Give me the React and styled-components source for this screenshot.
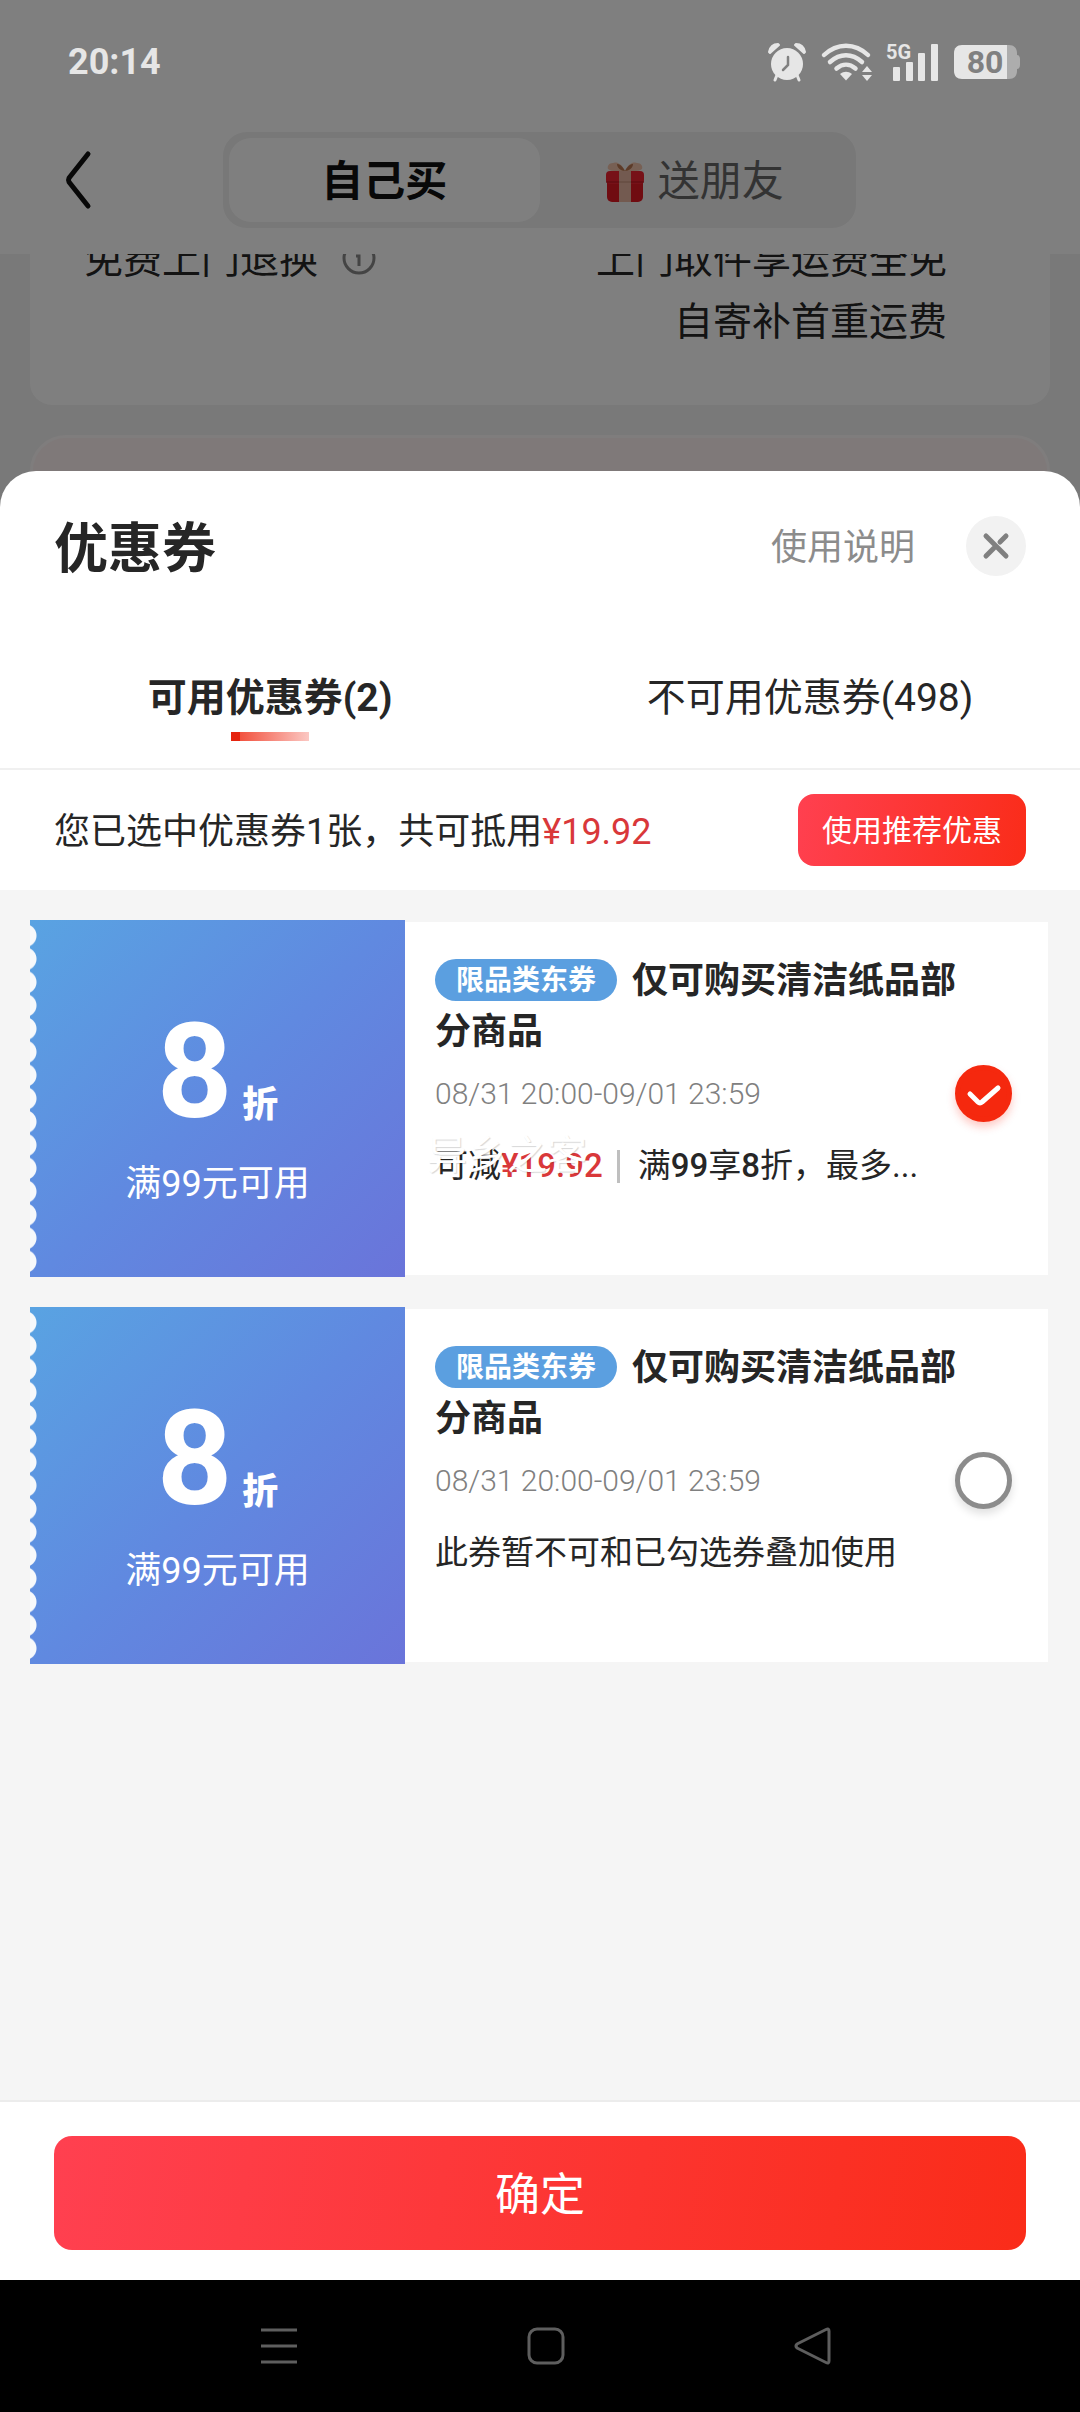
import React, { useState } from 'react'
import styled, { createGlobalStyle, css } from 'styled-components'

const GlobalStyle = createGlobalStyle`
  * {
    box-sizing: border-box;
  }

  body {
    margin: 0;
    background-color: #000;
    font-family: Roboto, "Noto Sans CJK SC", sans-serif;
    color: #262626;
  }

  button {
    margin: 0;
    padding: 0;
    border: none;
    background: none;
    font-family: inherit;
    color: inherit;
    cursor: pointer;
  }

  svg {
    display: block;
    overflow: visible;
  }
`

const Page = styled.div`
  display: flex;
  flex-direction: column;
  min-height: 100vh;
`

/* checkout page behind the sheet */

const Behind = styled.div`
  position: relative;
  height: 507px;
  overflow: hidden;
  background-color: #f2f2f2;
`

const Dim = styled.div`
  position: absolute;
  inset: 0;
  z-index: 2;
  background-color: rgba(0, 0, 0, 0.5);
`

const TopArea = styled.header`
  position: relative;
  background-color: #fff;
`

const StatusBar = styled.div`
  position: relative;
  z-index: 3;
  display: flex;
  align-items: center;
  justify-content: space-between;
  height: 106px;
  padding: 18px 60px 0 68px;
  color: #e6e6e6;
`

const Time = styled.span`
  font-size: 36px;
  font-weight: 700;
  line-height: 42px;
`

const StatusIcons = styled.div`
  display: flex;
  align-items: center;
  gap: 15px;
`

const NavRow = styled.div`
  display: grid;
  grid-template-columns: 223px 1fr 224px;
  align-items: center;
  height: 148px;
`

const BackBtn = styled.button`
  justify-self: start;
  padding-left: 64px;
`

const Segment = styled.div`
  display: grid;
  grid-template-columns: 1fr 1fr;
  height: 96px;
  padding: 6px;
  border-radius: 24px;
  background-color: #f0f0f0;
`

const SegmentBtn = styled.button`
  display: flex;
  align-items: center;
  justify-content: center;
  gap: 14px;
  padding-top: 4px;
  border-radius: 22px;
  font-size: 42px;
  line-height: 54px;
  color: #666;

  ${({ $active }) => $active && css`
    background-color: #fff;
    font-weight: 700;
    color: #111;
  `}
`

const ServiceCard = styled.div`
  display: flex;
  justify-content: space-between;
  margin: -25px 30px 30px;
  padding: 0 103px 52px 54px;
  border-radius: 0 0 22px 22px;
  background-color: #fff;
  font-size: 39px;
  line-height: 62px;
`

const ServiceName = styled.div`
  display: flex;
  align-items: center;
  gap: 24px;
  height: 62px;
`

const ServiceText = styled.div`
  text-align: right;
`

const NextCard = styled.div`
  height: 120px;
  margin: 0 30px;
  border: 3px solid #fffafa;
  border-radius: 36px;
  background-color: #fff2f2;
`

/* coupon sheet */

const Sheet = styled.section`
  position: relative;
  z-index: 4;
  display: flex;
  flex: 1;
  flex-direction: column;
  margin-top: -36px;
  border-radius: 36px 36px 0 0;
  background-color: #fff;
`

const SheetHead = styled.div`
  display: flex;
  align-items: center;
  height: 150px;
  padding: 0 54px;
`

const SheetTitle = styled.h2`
  flex: 1;
  margin: 0;
  padding-top: 8px;
  font-size: 54px;
  font-weight: 700;
  line-height: 60px;
`

const HelpBtn = styled.button`
  margin-right: 51px;
  padding-top: 4px;
  font-size: 36px;
  line-height: 48px;
  color: #8c8c8c;
`

const CloseBtn = styled.button`
  display: flex;
  align-items: center;
  justify-content: center;
  width: 60px;
  height: 60px;
  border-radius: 50%;
  background-color: #f2f2f2;
`

const Tabs = styled.div`
  display: grid;
  grid-template-columns: 1fr 1fr;
  height: 149px;
  border-bottom: 2px solid #f0f0f0;
`

const Tab = styled.button`
  display: flex;
  flex-direction: column;
  align-items: center;
  gap: 7px;
  padding-top: 50px;
  font-size: 39px;
  font-weight: ${({ $active }) => ($active ? 700 : 400)};
  line-height: 54px;
`

const TabLine = styled.span`
  width: 78px;
  height: 9px;
  background: linear-gradient(90deg, #e5240f 9px, #f2523f 9px, #fbc8c3);
`

const Summary = styled.div`
  display: flex;
  align-items: center;
  justify-content: space-between;
  height: 120px;
  padding: 0 54px;
  font-size: 36px;
  line-height: 48px;
`

const SummaryText = styled.span`
  padding-top: 4px;
`

const Price = styled.span`
  color: #d9383a;
  font-weight: ${({ $bold }) => ($bold ? 500 : 400)};
`

const RecommendBtn = styled.button`
  height: 72px;
  padding: 2px 24px 0;
  border-radius: 16px;
  background: linear-gradient(100deg, #ff4050, #fa2c19);
  font-size: 30px;
  line-height: 42px;
  color: #fff;
`

const CouponList = styled.ul`
  display: flex;
  flex: 1;
  flex-direction: column;
  gap: 30px;
  margin: 0;
  padding: 30px;
  background-color: #f5f5f5;
  list-style: none;
`

const Coupon = styled.li`
  display: grid;
  grid-template-columns: 375px 1fr;
  height: 357px;
`

const CouponLeft = styled.div`
  position: relative;
  display: flex;
  flex-direction: column;
  align-items: center;
  padding-top: 92px;
  background: linear-gradient(135deg, #59a3e2, #6089e0 50%, #6a74da);
  color: #fff;

  /* torn edge of the ticket */
  &::before {
    content: "";
    position: absolute;
    top: 4px;
    bottom: 4px;
    left: 0;
    width: 8px;
    background: radial-gradient(circle 12px at -5px 50%, #f7f9fb 11px, transparent 12px) 0 0 / 8px 23px;
    background-repeat: round;
  }
`

const Discount = styled.div`
  display: flex;
  align-items: baseline;
  gap: 10px;
  height: 120px;
  font-size: 36px;
  font-weight: 900;
  line-height: 120px;
`

const DiscountNumber = styled.span`
  font-size: 132px;
  font-weight: 700;
`

const Threshold = styled.div`
  margin-top: 28px;
  font-size: 36px;
  line-height: 48px;
`

const CouponBody = styled.div`
  position: relative;
  display: grid;
  grid-template-columns: 1fr 57px;
  grid-template-rows: 102px 71px 74px;
  align-items: center;
  align-content: start;
  margin: 2px 2px 2px 0;
  padding: 34px 36px 0 30px;
  background-color: #fff;
`

const CouponTitle = styled.label`
  grid-column: 1 / 3;
  padding-right: 24px;
  font-size: 36px;
  font-weight: 700;
  line-height: 51px;
`

const Tag = styled.span`
  display: inline-block;
  height: 42px;
  margin: 0 15px 6px 0;
  padding: 0 21px;
  border-radius: 21px;
  background-color: #5b9fe0;
  font-size: 28px;
  line-height: 44px;
  color: #fff;
  vertical-align: middle;
`

const ValidTime = styled.div`
  font-size: 30px;
  font-weight: 300;
  line-height: 42px;
  color: #808080;
`

const CheckWrap = styled.span`
  position: relative;
  width: 57px;
  height: 57px;

  svg {
    position: absolute;
    inset: 0;
    pointer-events: none;
  }
`

const Check = styled.input`
  display: block;
  appearance: none;
  width: 57px;
  height: 57px;
  margin: 0;
  border: 5px solid #8c8c8c;
  border-radius: 50%;
  background-color: #fff;
  box-shadow: 0 5px 8px rgba(0, 0, 0, 0.12);

  &:checked {
    border-color: #f5280e;
    background-color: #f5280e;
    box-shadow: 0 5px 8px rgba(250, 44, 25, 0.25);
  }
`

const Note = styled.div`
  display: flex;
  align-items: center;
  grid-column: 1 / 3;
  font-size: 33px;
  line-height: 48px;
  white-space: nowrap;

  b {
    font-weight: 500;
  }
`

const Separator = styled.i`
  width: 3px;
  height: 33px;
  margin: 0 18px 0 14px;
  background-color: #bfbfbf;
`

const Watermark = styled.span`
  position: absolute;
  top: 210px;
  left: 22px;
  font-size: 40px;
  line-height: 48px;
  color: #fff;
  text-shadow: 1px 1px 1px rgba(0, 0, 0, 0.16);
  pointer-events: none;
`

const Footer = styled.div`
  padding: 34px 54px 30px;
  border-top: 2px solid #ececec;
`

const ConfirmBtn = styled.button`
  display: block;
  width: 100%;
  height: 114px;
  padding-top: 6px;
  border-radius: 18px;
  background: linear-gradient(98deg, #ff4050, #fa2c19);
  font-size: 45px;
  line-height: 60px;
  color: #fff;
`

const SystemNav = styled.nav`
  display: flex;
  align-items: center;
  justify-content: space-between;
  height: 132px;
  padding: 0 248px 0 259px;
  background-color: #000;
`

const coupons = [
  {
    id: 'coupon-1',
    title: '仅可购买清洁纸品部分商品',
    time: '08/31 20:00-09/01 23:59',
    save: '¥19.92',
  },
  {
    id: 'coupon-2',
    title: '仅可购买清洁纸品部分商品',
    time: '08/31 20:00-09/01 23:59',
    note: '此券暂不可和已勾选券叠加使用',
  },
]

function AlarmIcon() {
  return (
    <svg width="38" height="38" viewBox="0 0 38 38" fill="currentColor">
      <path d="M1 9C2 4 5 1 10 1l1 1L2 10z" stroke="currentColor" strokeWidth="2" strokeLinejoin="round" />
      <path d="M37 9c-1-5-4-8-9-8l-1 1 9 8z" stroke="currentColor" strokeWidth="2" strokeLinejoin="round" />
      <path d="M9 32l-2 5M29 32l2 5" stroke="currentColor" strokeWidth="3" strokeLinecap="round" />
      <circle cx="19" cy="21" r="16" />
      <path d="M20 14v8l-5 5" fill="none" stroke="#808080" strokeWidth="2.500" strokeLinecap="round" />
    </svg>
  )
}

function WifiIcon() {
  return (
    <svg width="51" height="38" viewBox="0 0 51 38" fill="none" stroke="currentColor" strokeWidth="4.500" strokeLinecap="round">
      <path d="M3 12c13-12.500 31-12.500 44 0" />
      <path d="M9 19c10-9 22-9 32 0" />
      <path d="M15.500 25.500c6-5 13-5 19 0" />
      <path d="M19 31c4-3 8-3 12 0l-6 6.500z" fill="currentColor" stroke="none" />
      <path d="M41 29h10l-5-6zM41 32h10l-5 6z" fill="currentColor" stroke="none" />
    </svg>
  )
}

function SignalIcon() {
  return (
    <svg width="52" height="38" viewBox="0 0 52 38" fill="currentColor">
      <text x="-1" y="16" fontSize="20" fontWeight="700" fontFamily="Roboto, sans-serif">5G</text>
      <rect x="6" y="24" width="7" height="14" rx="1" />
      <rect x="19" y="19" width="7" height="19" rx="1" />
      <rect x="31" y="10" width="7" height="28" rx="1" />
      <rect x="44" y="1" width="7" height="37" rx="1" />
    </svg>
  )
}

function BatteryIcon() {
  return (
    <svg width="66" height="34" viewBox="0 0 66 34">
      <path d="M53 0h2c5 0 8 3 8 8v2c2 0 3 2 3 4v6c0 2-1 4-3 4v2c0 5-3 8-8 8h-2z" fill="#adadad" />
      <path d="M53 0H8C3 0 0 3 0 8v18c0 5 3 8 8 8h45z" fill="#e6e6e6" />
      <text x="31" y="28" textAnchor="middle" fontSize="32" fontWeight="700" fontFamily="Roboto, sans-serif" fill="#808080">80</text>
    </svg>
  )
}

function GiftIcon() {
  return (
    <svg width="38" height="42" viewBox="0 0 38 42">
      <path d="M19 10C15 1 9 1 7 2 3 2 1 5 2 8c3 3 10 2 17 2z" fill="#efc0a8" />
      <path d="M19 10c4-9 10-9 12-8 4 0 6 3 5 6-3 3-10 2-17 2z" fill="#efc0a8" />
      <path d="M19 10C16 4 13 3 11 3c0 4 4 7 8 7zM19 10c3-6 6-7 8-7 0 4-4 7-8 7z" fill="#b97750" />
      <rect x="1" y="17" width="36" height="24" rx="5" fill="#e01823" />
      <rect x="0" y="10" width="38" height="13" rx="4" fill="#ee2230" />
      <path d="M0 21h38" stroke="#b5121d" strokeWidth="1" />
      <rect x="13" y="10" width="12" height="31" fill="#e6b5a0" />
      <path d="M13 21h12" stroke="#c08d75" strokeWidth="1" />
    </svg>
  )
}

function CouponItem({ coupon, checked, onToggle }) {
  return (
    <Coupon>
      <CouponLeft>
        <Discount>
          <DiscountNumber>8</DiscountNumber>折
        </Discount>
        <Threshold>满99元可用</Threshold>
      </CouponLeft>
      <CouponBody>
        <CouponTitle htmlFor={coupon.id}>
          <Tag>限品类东券</Tag>
          {coupon.title}
        </CouponTitle>
        <ValidTime>{coupon.time}</ValidTime>
        <CheckWrap>
          <Check id={coupon.id} type="checkbox" checked={checked} onChange={onToggle} />
          {checked && (
            <svg width="57" height="57" viewBox="0 0 57 57" fill="none" stroke="#fff" strokeWidth="5" strokeLinecap="round" strokeLinejoin="round">
              <path d="M15 29l8 8q2 2 4 0l16-14" />
            </svg>
          )}
        </CheckWrap>
        <Note>
          {coupon.save ? (
            <>
              可减<Price $bold>{coupon.save}</Price>
              <Separator />
              <span>满<b>99</b>享<b>8</b>折，最多...</span>
            </>
          ) : coupon.note}
        </Note>
        {coupon.save && <Watermark>异乡之客</Watermark>}
      </CouponBody>
    </Coupon>
  )
}

function App() {
  const [selected, setSelected] = useState('coupon-1')

  return (
    <>
      <GlobalStyle />
      <Page>
        <Behind>
          <Dim />
          <TopArea>
            <StatusBar>
              <Time>20:14</Time>
              <StatusIcons>
                <AlarmIcon />
                <WifiIcon />
                <SignalIcon />
                <BatteryIcon />
              </StatusIcons>
            </StatusBar>
            <NavRow>
              <BackBtn aria-label="返回">
                <svg width="28" height="60" viewBox="0 0 28 60" fill="none" stroke="#111" strokeWidth="5" strokeLinecap="round" strokeLinejoin="round">
                  <path d="M24 4L5 28q-1 2 0 4l19 24" />
                </svg>
              </BackBtn>
              <Segment>
                <SegmentBtn $active>自己买</SegmentBtn>
                <SegmentBtn>
                  <GiftIcon />
                  送朋友
                </SegmentBtn>
              </Segment>
            </NavRow>
          </TopArea>
          <ServiceCard>
            <ServiceName>
              免费上门退换
              <svg width="34" height="34" viewBox="0 0 34 34" fill="none" stroke="#888" strokeWidth="3">
                <circle cx="17" cy="15" r="15" />
                <path d="M17 6v3M14 13h3v10" />
              </svg>
            </ServiceName>
            <ServiceText>
              上门取件享运费全免<br />
              自寄补首重运费
            </ServiceText>
          </ServiceCard>
          <NextCard />
        </Behind>

        <Sheet>
          <SheetHead>
            <SheetTitle>优惠券</SheetTitle>
            <HelpBtn>使用说明</HelpBtn>
            <CloseBtn aria-label="关闭">
              <svg width="26" height="26" viewBox="0 0 26 26" fill="none" stroke="#808080" strokeWidth="5" strokeLinecap="round">
                <path d="M3 3l20 20M23 3l-6 6M11 15l-8 8" />
              </svg>
            </CloseBtn>
          </SheetHead>

          <Tabs role="tablist">
            <Tab role="tab" aria-selected="true" $active>
              可用优惠券(2)
              <TabLine />
            </Tab>
            <Tab role="tab" aria-selected="false">不可用优惠券(498)</Tab>
          </Tabs>

          <Summary>
            <SummaryText>您已选中优惠券1张，共可抵用<Price>¥19.92</Price></SummaryText>
            <RecommendBtn>使用推荐优惠</RecommendBtn>
          </Summary>

          <CouponList>
            {coupons.map((coupon) => (
              <CouponItem
                key={coupon.id}
                coupon={coupon}
                checked={selected === coupon.id}
                onToggle={() => setSelected(selected === coupon.id ? '' : coupon.id)}
              />
            ))}
          </CouponList>

          <Footer>
            <ConfirmBtn>确定</ConfirmBtn>
          </Footer>
        </Sheet>

        <SystemNav>
          <svg width="40" height="40" viewBox="0 0 40 40" stroke="#5e5e5e" strokeWidth="3">
            <path d="M2 4h36M2 20h36M2 36h36" />
          </svg>
          <svg width="40" height="40" viewBox="0 0 40 40" fill="none" stroke="#5e5e5e" strokeWidth="3">
            <rect x="3" y="3" width="34" height="34" rx="8" />
          </svg>
          <svg width="40" height="40" viewBox="0 0 40 40" fill="none" stroke="#5e5e5e" strokeWidth="3" strokeLinejoin="round">
            <path d="M34 3.500Q37 2 37 5v30q0 3-3 1.500L5 22q-2-2 0-4z" />
          </svg>
        </SystemNav>
      </Page>
    </>
  )
}

export default App
